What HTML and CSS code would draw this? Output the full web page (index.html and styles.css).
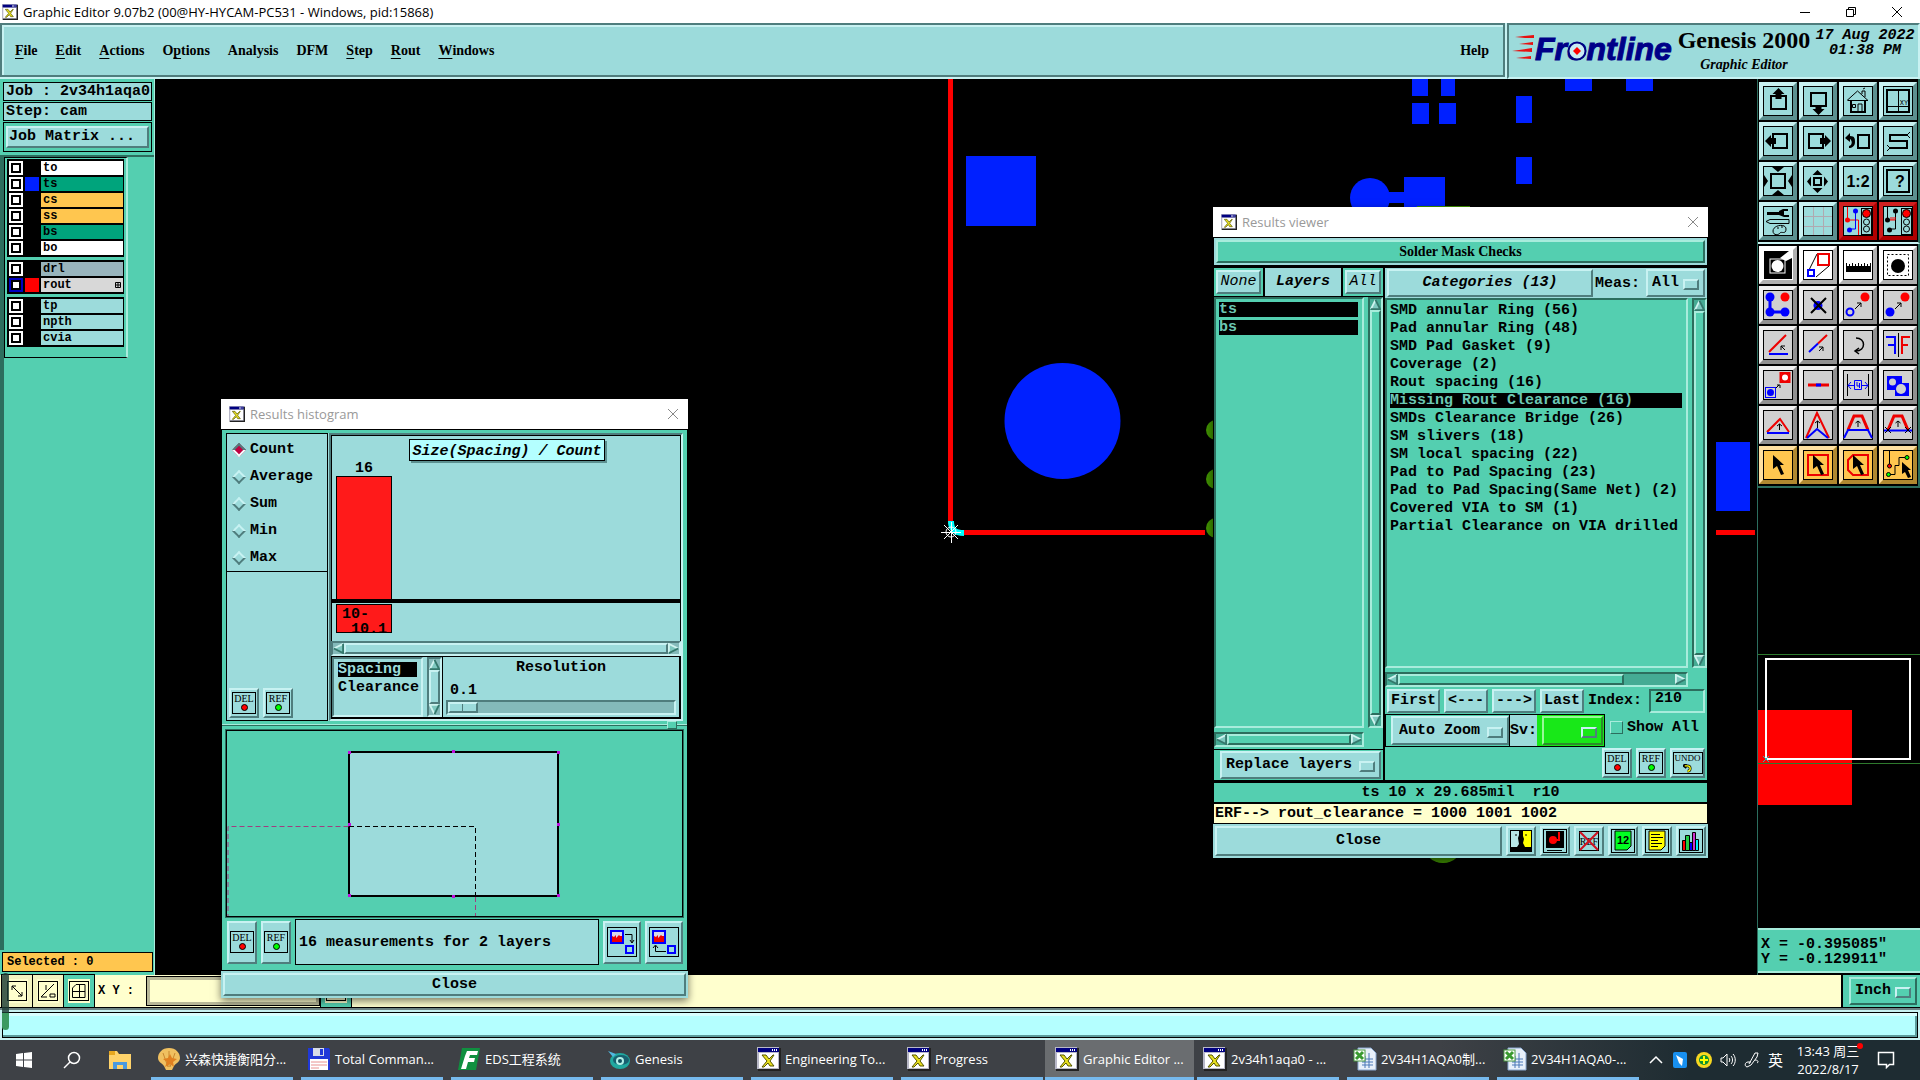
FILE: index.html
```html
<!DOCTYPE html>
<html lang="en">
<head>
<meta charset="utf-8">
<title>Graphic Editor 9.07b2</title>
<link rel="stylesheet" href="styles.css">
</head>
<body>
<svg class="defs" aria-hidden="true">
  <symbol id="app" viewBox="0 0 24 24"><rect x="1" y="1" width="23" height="23" fill="#222"/><rect width="22" height="22" fill="#b8b8c8"/><rect x="1" y="1" width="21" height="4" fill="#000080"/><path d="M15 2h1v2h-1zM17 2h1v2h-1zM19 2h1v2h-1z" fill="#fff"/><rect x="2" y="6" width="19" height="15" fill="#fff"/><path d="M5 8h4l3 4 4-4h1l-4 6 4 5h-4l-2-3-4 4H5l5-6z" fill="#e8e020" stroke="#555500"/></symbol>
  <symbol id="up" viewBox="0 0 12 12"><path d="M6 1 1 11h10z" fill="#7fc9c0"/><path d="M1 11 6 1" stroke="#d0f4f0" stroke-width="2"/><path d="M6 1l5 10H1" fill="none" stroke="#34786c" stroke-width="2"/></symbol>
  <symbol id="down" viewBox="0 0 12 12"><path d="M6 11 1 1h10z" fill="#7fc9c0"/><path d="M11 1H1l5 10" fill="none" stroke="#d0f4f0" stroke-width="2"/><path d="M6 11 11 1" stroke="#34786c" stroke-width="2"/></symbol>
  <symbol id="left" viewBox="0 0 12 12"><path d="M1 6 11 1v10z" fill="#7fc9c0"/><path d="M1 6 11 1" stroke="#d0f4f0" stroke-width="2"/><path d="M11 1v10L1 6" fill="none" stroke="#34786c" stroke-width="2"/></symbol>
  <symbol id="right" viewBox="0 0 12 12"><path d="M11 6 1 1v10z" fill="#7fc9c0"/><path d="M1 11V1l10 5" fill="none" stroke="#d0f4f0" stroke-width="2"/><path d="M11 6 1 11" stroke="#34786c" stroke-width="2"/></symbol>
  <symbol id="cur" viewBox="0 0 30 30"><path d="M10 5v14l4-3 4 9 3-1-4-9h4z"/></symbol>
  <symbol id="lights" viewBox="0 0 30 30"><rect x="18.500" y="2.500" width="10" height="26" fill="#9cdbdb" stroke="#000"/><circle cx="23.500" cy="7.500" r="4" fill="#f00" stroke="#000"/><circle cx="23.500" cy="16" r="3" fill="none" stroke="#000"/><circle cx="23.500" cy="23" r="3" fill="none" stroke="#000"/></symbol>
  <symbol id="excel" viewBox="0 0 24 24"><path d="M5 1h13l5 5v17H5z" fill="#e8f0fa" stroke="#8aa8d0"/><path d="M9 12h11M9 15h11M9 18h11M12 9v12M16 6v15" stroke="#4a78b8"/><rect x="1" y="3" width="11" height="11" fill="#fff" stroke="#4a9a40"/><path d="m3 5 7 7M10 5l-7 7" stroke="#3a9a30" stroke-width="3"/></symbol>
</svg>

<header class="titlebar">
  <svg class="i16"><use href="#app"/></svg>
  <h1>Graphic Editor 9.07b2 (00@HY-HYCAM-PC531 - Windows, pid:15868)</h1>
  <div class="winbtns">
    <button aria-label="Minimize"><svg viewBox="0 0 12 12"><path d="M1 6.500h10" stroke="#000"/></svg></button>
    <button aria-label="Restore"><svg viewBox="0 0 12 12"><path d="M1.500 3.500h7v7h-7zM3.500 3.500v-2h7v7h-2" fill="none" stroke="#000"/></svg></button>
    <button aria-label="Close window"><svg viewBox="0 0 12 12"><path d="m1 1 10 10M11 1 1 11" stroke="#000"/></svg></button>
  </div>
</header>

<div class="menurow">
  <nav class="menubar">
    <button><u>F</u>ile</button><button><u>E</u>dit</button><button><u>A</u>ctions</button><button>O<u>p</u>tions</button><button>Analysis</button><button>DFM</button><button><u>S</u>tep</button><button><u>R</u>out</button><button><u>W</u>indows</button>
    <button class="help">Help</button>
  </nav>
  <div class="brand">
    <svg class="logo" viewBox="0 -4 164 44"><g fill="#e81010"><path d="M3 4l19-2v3H13zM7 11l14-2v3zM0 18l20-3v4zM4 25l15-2v3z"/></g><text x="23" y="27" class="logotext">Frontline</text><circle cx="65" cy="18" r="8.500" fill="#c8ecf4" stroke="#000080" stroke-width="2"/><path d="m65 14 4 4-4 4-4-4z" fill="#f00"/></svg>
    <div class="product"><strong>Genesis 2000</strong><em>Graphic Editor</em></div>
    <time class="stamp">17 Aug 2022<br>01:38 PM</time>
  </div>
</div>

<main class="work">
  <aside class="side">
    <div class="jobbox">
      <p>Job : 2v34h1aqa0</p><p>Step: cam</p>
      <div class="matrix"><button class="bev">Job Matrix ...</button></div>
    </div>
    <div class="layerpane">
      <div class="layers">
        <ul>
          <li class="white"><input type="checkbox" id="l1"><i></i><label for="l1">to</label></li>
          <li class="mask"><input type="checkbox" id="l2"><i class="blue"></i><label for="l2">ts</label></li>
          <li class="signal"><input type="checkbox" id="l3"><i></i><label for="l3">cs</label></li>
          <li class="signal"><input type="checkbox" id="l4"><i></i><label for="l4">ss</label></li>
          <li class="mask"><input type="checkbox" id="l5"><i></i><label for="l5">bs</label></li>
          <li class="white"><input type="checkbox" id="l6"><i></i><label for="l6">bo</label></li>
        </ul>
        <ul>
          <li class="drill"><input type="checkbox" id="l7"><i></i><label for="l7">drl</label></li>
          <li class="rout"><input type="checkbox" id="l8" checked><i class="red"></i><label for="l8">rout<svg viewBox="0 0 6 6"><path d="M.5.5h5v5h-5zM3 0v6M0 3h6" fill="none" stroke="#000"/></svg></label></li>
        </ul>
        <ul>
          <li><input type="checkbox" id="l9"><i></i><label for="l9">tp</label></li>
          <li><input type="checkbox" id="l10"><i></i><label for="l10">npth</label></li>
          <li><input type="checkbox" id="l11"><i></i><label for="l11">cvia</label></li>
        </ul>
      </div>
    </div>
    <p class="selected">Selected : 0</p>
  </aside>

  <div class="canvas">
    <svg width="100%" height="100%"><g transform="translate(-155 -79)">
      <g fill="#0020ff"><rect x="966" y="156" width="70" height="70"/><circle cx="1062.500" cy="421" r="58"/>
      <path d="M1412 79h16v17h-16zM1441 79h14v17h-14zM1412 103h17v21h-17zM1439 103h17v21h-17zM1565 79h27v12h-27zM1626 79h27v12h-27zM1516 96h16v27h-16zM1516 157h16v27h-16zM1404 177h41v40h-41zM1385 192h22v11h-22zM1716 442h34v69h-34z"/><circle cx="1370" cy="198" r="20"/></g>
      <g fill="#3f8f00"><circle cx="1216" cy="430" r="10"/><circle cx="1216" cy="479" r="10"/><circle cx="1216" cy="528" r="10"/><circle cx="1443" cy="843" r="20"/><rect x="1417" y="206" width="53" height="2"/></g>
      <path d="M950.500 79v445M962 532.500h243M1716 532.500h39" stroke="#f00" stroke-width="5"/>
      <path d="M951 521c0 8 3 12 13 12" fill="none" stroke="#0ff" stroke-width="6"/>
      <g stroke="#fff" fill="none"><circle cx="951" cy="532" r="5"/><path d="M941 532.500h20M951.500 522v21M944 525l14 14M958 525l-14 14"/></g>
    </g></svg>
  </div>

  <aside class="tools">
    <div class="grid top">
      <button aria-label="Pan up"><svg viewBox="0 0 30 30"><rect class="f" x=".5" y=".5" width="29" height="29"/><rect class="s2" x="8" y="10" width="15" height="13"/><path d="M15.500 2l6 6h-3v5h-6V8h-3z"/></svg></button>
      <button aria-label="Pan down"><svg viewBox="0 0 30 30"><rect class="f" x=".5" y=".5" width="29" height="29"/><rect class="s2" x="8" y="7" width="15" height="13"/><path d="M15.500 29l6-6h-3v-4h-6v4h-3z"/></svg></button>
      <button aria-label="Home"><svg viewBox="0 0 30 30"><rect class="f" x=".5" y=".5" width="29" height="29"/><path class="s1" d="M4 14.500 14.500 5l10.500 9.500M5 14.500h20M9.500 18.500h3v3h-3zM15 26v-8h4v8M19 8V5h3v6M20 3l2-1"/><path class="s2" d="M8 14v12h14V14"/></svg></button>
      <button aria-label="Windows XY"><svg viewBox="0 0 30 30"><rect class="f" x=".5" y=".5" width="29" height="29"/><rect class="s2" x="4" y="4" width="22" height="22"/><path class="s1" d="M15.500 4v22M4 20.500h22"/><text x="21" y="19" class="xy">XY</text></svg></button>
      <button aria-label="Pan left"><svg viewBox="0 0 30 30"><rect class="f" x=".5" y=".5" width="29" height="29"/><rect class="s2" x="10" y="8" width="14" height="14"/><path d="M2 15l6-6v3h5v6H8v3z"/></svg></button>
      <button aria-label="Pan right"><svg viewBox="0 0 30 30"><rect class="f" x=".5" y=".5" width="29" height="29"/><rect class="s2" x="6" y="8" width="14" height="14"/><path d="M28 15l-6-6v3h-5v6h5v3z"/></svg></button>
      <button aria-label="Previous view"><svg viewBox="0 0 30 30"><rect class="f" x=".5" y=".5" width="29" height="29"/><rect class="s2" x="15" y="9" width="11" height="13"/><path d="M2 12l5-5v3c5 0 5 3 5 6 0 4-3 6-6 6v-2c4-1 3-6 1-7v3z"/></svg></button>
      <button aria-label="Snake"><svg viewBox="0 0 30 30"><rect class="f" x=".5" y=".5" width="29" height="29"/><path class="s2" d="M24 9H7v6h17v7H7"/><path class="s1" d="M24 9l3-3M24 9l3 3M7 22l-3-3M7 22l-3 3"/></svg></button>
      <button aria-label="Zoom fit"><svg viewBox="0 0 30 30"><rect class="f" x=".5" y=".5" width="29" height="29"/><rect class="s2" x="8" y="8" width="14" height="14"/><path d="M9 1h12l-6 5zM9 29h12l-6-5zM1 9v12l4-6zM29 9v12l-4-6z"/></svg></button>
      <button aria-label="Zoom out"><svg viewBox="0 0 30 30"><rect class="f" x=".5" y=".5" width="29" height="29"/><rect class="s2" x="11" y="12" width="7" height="7"/><path d="M14.500 4l5 5h-10zM14.500 27l5-5h-10zM4 15.500l4-5v10zM25 15.500l-4-5v10z"/></svg></button>
      <button aria-label="Zoom ratio"><svg viewBox="0 0 30 30"><rect class="f" x=".5" y=".5" width="29" height="29"/><text x="15" y="21" class="ic">1:2</text></svg></button>
      <button aria-label="Query"><svg viewBox="0 0 30 30"><rect class="f" x=".5" y=".5" width="29" height="29"/><rect class="s2" x="4" y="4" width="22" height="22"/><text x="17" y="21" class="ic">?</text></svg></button>
      <button aria-label="Setup"><svg viewBox="0 0 30 30"><rect class="f" x=".5" y=".5" width="29" height="29"/><path d="M4 6h13v3H4zM16 5l4-2h5v2h-4v4h5v2h-5l-5-2z"/><path class="s1" d="M3 15.500l4-2h19v4H7zM10 25c0-6 13-8 13-2s-5 2-6 4-7 3-7-2zM14 22h2M18 21h2"/></svg></button>
      <button aria-label="Grid"><svg viewBox="0 0 30 30"><rect class="f" x=".5" y=".5" width="29" height="29"/><path d="M10.500 1v28M20.500 1v28M1 10.500h28M1 20.500h28" stroke="#b0a8b0"/></svg></button>
      <button class="redb" aria-label="Active nets"><svg viewBox="0 0 30 30"><rect class="f" x=".5" y=".5" width="29" height="29"/><path d="M4.500 1v13h11v15" fill="none" stroke="#f00"/><path d="M12.500 5v18H7" fill="none" stroke="#00f"/><circle cx="4.500" cy="14" r="2.500" fill="#f00"/><circle cx="12.500" cy="5" r="2.500" fill="#00f"/><circle cx="6.500" cy="24" r="2.500" fill="#00f"/><use href="#lights"/></svg></button>
      <button class="redb" aria-label="Spacing check"><svg viewBox="0 0 30 30"><rect class="f" x=".5" y=".5" width="29" height="29"/><path class="s1" d="M4.500 1v13M12.500 5v18H7"/><circle cx="4.500" cy="14" r="2.500"/><circle cx="12.500" cy="5" r="2.500"/><circle cx="6.500" cy="24" r="2.500"/><path d="M7 14h5M8 11v3M10 11v3M12 11v3" stroke="#f00"/><use href="#lights"/></svg></button>
    </div>
    <div class="grid low">
      <button class="wh" aria-label="Select feature"><svg viewBox="0 0 30 30"><rect x="1" y="1" width="28" height="28"/><path d="M17 8l9-7h3v7l-6 3z" fill="#fff"/><rect x="7" y="9" width="15" height="14" fill="none" stroke="#fff"/><circle cx="14.500" cy="16" r="6" fill="#fff"/></svg></button>
      <button class="wh" aria-label="Magnify"><svg viewBox="0 0 30 30"><rect class="f" x=".5" y=".5" width="29" height="29"/><path class="s1" d="M6 20L14 4M13 27l13-11"/><rect x="15" y="4" width="11" height="11" fill="none" stroke="#e00" stroke-width="2"/><rect x="5" y="20" width="6" height="6" fill="none" stroke="#00f" stroke-width="2"/></svg></button>
      <button class="wh" aria-label="Measure"><svg viewBox="0 0 30 30"><rect class="f" x=".5" y=".5" width="29" height="29"/><path d="M3 16h25v6H3z"/><path d="M3.500 13v4M6.500 14v3M9.500 13v4M12.500 14v3M15.500 13v4M18.500 14v3M21.500 13v4M24.500 14v3M27.500 13v4" stroke="#000"/></svg></button>
      <button class="wh" aria-label="Area select"><svg viewBox="0 0 30 30"><rect class="f" x=".5" y=".5" width="29" height="29"/><rect x="4.500" y="4.500" width="21" height="21" fill="none" stroke="#000" stroke-dasharray="2"/><circle cx="15" cy="16" r="7"/></svg></button>

      <button aria-label="Add"><svg viewBox="0 0 30 30"><rect class="f" x=".5" y=".5" width="29" height="29"/><path d="M7 7v15h15" fill="none" stroke="#00f" stroke-width="3"/><g fill="#00f"><circle cx="7" cy="7" r="4.500"/><circle cx="7" cy="22" r="4.500"/><circle cx="22" cy="22" r="4.500"/></g><circle cx="22" cy="7" r="4.500" fill="#f00"/></svg></button>
      <button aria-label="Delete"><svg viewBox="0 0 30 30"><rect class="f" x=".5" y=".5" width="29" height="29"/><circle cx="15" cy="15.500" r="4.500" fill="#00f"/><path class="s2" d="M8 8l15 15M23 8L8 23"/></svg></button>
      <button aria-label="Move"><svg viewBox="0 0 30 30"><rect class="f" x=".5" y=".5" width="29" height="29"/><circle cx="7" cy="22" r="3.500" fill="none" stroke="#00f" stroke-width="2"/><circle cx="22" cy="7" r="4.500" fill="#f00"/><path class="s1" d="M12 19l6-6M14 13h4v4"/></svg></button>
      <button aria-label="Copy"><svg viewBox="0 0 30 30"><rect class="f" x=".5" y=".5" width="29" height="29"/><circle cx="7" cy="22" r="4.500" fill="#00f"/><circle cx="22" cy="7" r="4.500" fill="#f00"/><path class="s1" d="M12 19l6-6M14 13h4v4"/></svg></button>
      <button aria-label="Rotate line"><svg viewBox="0 0 30 30"><rect class="f" x=".5" y=".5" width="29" height="29"/><path d="M6 22L23 5" stroke="#e00" stroke-width="2"/><path d="M6 24h19" stroke="#00f" stroke-width="2"/><path class="s1" d="M22 20l-4-4M18 20v-4h4"/></svg></button>
      <button aria-label="Stretch line"><svg viewBox="0 0 30 30"><rect class="f" x=".5" y=".5" width="29" height="29"/><path d="M15 13.500L24 5" stroke="#e00" stroke-width="2"/><path d="M6 22l9-8.500" stroke="#00f" stroke-width="2"/><path class="s1" d="M16 21l4-4M16 17h4v4"/></svg></button>
      <button aria-label="Rotate"><svg viewBox="0 0 30 30"><rect class="f" x=".5" y=".5" width="29" height="29"/><path d="M13 8c10 0 10 13 0 13M16 18l-4 3 4 3" fill="none" stroke="#000" stroke-width="1.500"/></svg></button>
      <button aria-label="Mirror"><svg viewBox="0 0 30 30"><rect class="f" x=".5" y=".5" width="29" height="29"/><path class="s1" d="M15.500 3v24"/><path d="M3 7h9v17M5 15h7" fill="none" stroke="#00f" stroke-width="2"/><path d="M27 7h-8v17M25 15h-6" fill="none" stroke="#e00" stroke-width="2"/></svg></button>
      <button aria-label="Copy to layer"><svg viewBox="0 0 30 30"><rect class="f" x=".5" y=".5" width="29" height="29"/><rect x="17.500" y="3" width="9" height="9" fill="#fff" stroke="#e00" stroke-width="2"/><circle cx="22" cy="7.500" r="4" fill="none" stroke="#e00" stroke-width="2"/><rect x="2.500" y="17.500" width="10" height="10" fill="none" stroke="#00f"/><circle cx="7.500" cy="22.500" r="3.500" fill="#00f"/><path class="s1" d="M13 18l3-3M14 15h3v3"/></svg></button>
      <button aria-label="Break line"><svg viewBox="0 0 30 30"><rect class="f" x=".5" y=".5" width="29" height="29"/><path d="M5 15h21" stroke="#e00" stroke-width="3"/><path d="M13 15h5" stroke="#00f" stroke-width="3"/></svg></button>
      <button aria-label="Spacing"><svg viewBox="0 0 30 30"><rect class="f" x=".5" y=".5" width="29" height="29"/><path class="s1" d="M4.500 4v22M25.500 4v22"/><path d="M5 15.500h6M19 15.500h6M8 12l-3 3.500L8 19M22 12l3 3.500-3 3.500M11.500 10.500h7v9h-7zM14 12v4h3M16.500 13v5" fill="none" stroke="#00f"/></svg></button>
      <button aria-label="Merge shapes"><svg viewBox="0 0 30 30"><rect class="f" x=".5" y=".5" width="29" height="29"/><path d="M4 6h15v7h7v13H12v-6H4z" fill="#00f"/><circle cx="9.500" cy="12" r="3.500" fill="#d0d0d0"/><circle cx="18" cy="19" r="5" fill="#d0d0d0"/></svg></button>
      <button aria-label="Flat corner"><svg viewBox="0 0 30 30"><rect class="f" x=".5" y=".5" width="29" height="29"/><path d="M4 22L17 9l9 13" fill="none" stroke="#e00" stroke-width="2"/><path d="M4 23h22" stroke="#00f" stroke-width="2"/><path class="s1" d="M16.500 20v-6M14 16l2.500-2 2.500 2"/></svg></button>
      <button aria-label="Peak"><svg viewBox="0 0 30 30"><rect class="f" x=".5" y=".5" width="29" height="29"/><path d="M3 28L14 3l12 25" fill="none" stroke="#e00" stroke-width="2"/><path d="M4 28l10-9 11 9" fill="none" stroke="#00f" stroke-width="2"/><path class="s1" d="M14.500 18v-7M12 13l2.500-2 2.500 2"/></svg></button>
      <button aria-label="Plateau"><svg viewBox="0 0 30 30"><rect class="f" x=".5" y=".5" width="29" height="29"/><path d="M5 20l6-14h8l6 14" fill="none" stroke="#e00" stroke-width="3"/><path d="M1 28l4-8h20l4 8" fill="none" stroke="#00f" stroke-width="2"/><path class="s1" d="M15 17v-6M12.500 13l2.500-2 2.500 2"/></svg></button>
      <button aria-label="Plateau cut"><svg viewBox="0 0 30 30"><rect class="f" x=".5" y=".5" width="29" height="29"/><path d="M5 20l6-14h8l6 14" fill="none" stroke="#e00" stroke-width="3"/><path d="M1 20.500h28" stroke="#00f" stroke-width="2"/><path class="s1" d="M15 17v-6M12.500 13l2.500-2 2.500 2M2 17l6 6M8 17l-6 6M22 17l6 6M28 17l-6 6"/></svg></button>
      <button class="or" aria-label="Select"><svg viewBox="0 0 30 30"><rect class="f" x=".5" y=".5" width="29" height="29"/><use href="#cur"/></svg></button>
      <button class="or" aria-label="Select box"><svg viewBox="0 0 30 30"><rect class="f" x=".5" y=".5" width="29" height="29"/><rect x="5" y="5" width="20" height="20" fill="none" stroke="#e00" stroke-width="2"/><use href="#cur"/></svg></button>
      <button class="or" aria-label="Select polygon"><svg viewBox="0 0 30 30"><rect class="f" x=".5" y=".5" width="29" height="29"/><path d="M10 5h15v20H10l-5-5V10z" fill="none" stroke="#e00" stroke-width="2"/><use href="#cur"/></svg></button>
      <button class="or" aria-label="Select net"><svg viewBox="0 0 30 30"><rect class="f" x=".5" y=".5" width="29" height="29"/><path class="s1" d="M6.500 1v14M6 24.500h6v-9h4v-8h6"/><circle cx="6.500" cy="16" r="2" fill="#f00" stroke="#000"/><circle cx="24" cy="7.500" r="2" fill="#0f0" stroke="#000"/><circle cx="5.500" cy="24.500" r="2" fill="#0f0" stroke="#000"/><path d="M19 12v12l3-2 3 6 3-1-3-7h3z"/></svg></button>
    </div>
    <div class="mini"><svg width="100%" height="100%"><g transform="translate(-1758 -488)"><path d="M1758 710h94v95h-94z" fill="#f00"/><path d="M1758 654.500h162M1758 763.500h162" stroke="#2e7a2e"/><rect x="1766" y="659" width="144" height="100" fill="none" stroke="#fff" stroke-width="2"/><path d="M1763 756l6 6M1769 756l-6 6" stroke="#20c0c0"/></g></svg></div>
    <p class="coords">X = -0.395085"<br>Y = -0.129911"</p>
  </aside>
</main>

<footer class="entry">
  <button class="sq" aria-label="Snap"><svg viewBox="0 0 20 20"><rect class="f" x=".5" y=".5" width="19" height="19"/><path class="s1" d="M5 5l10 10M5 9V5h4M15 11v4h-4"/></svg></button>
  <button class="sq" aria-label="Angle"><svg viewBox="0 0 20 20"><rect class="f" x=".5" y=".5" width="19" height="19"/><path class="s1" d="M16 3L3 16h6M8 4v5M12 13h5v3h-5z"/></svg></button>
  <button class="sq grn" aria-label="Grid snap"><svg viewBox="0 0 20 20"><rect class="f" x=".5" y=".5" width="19" height="19"/><path class="s1" d="M7 3.500h9v13H3.500V7zM10.500 3v14M3 10.500h13"/></svg></button>
  <label for="xy">X Y :</label>
  <input id="xy" type="text">
  <button class="sq grn" aria-label="Apply"><svg viewBox="0 0 20 20"><rect class="f" x=".5" y=".5" width="19" height="19"/></svg></button>
  <div class="unit"><span class="opt gopt"><select aria-label="Units"><option>Inch</option></select></span></div>
</footer>
<div class="cmd"><input type="text" aria-label="Command line"></div>
<div class="grip"></div>

<section class="win hist">
  <header class="wtitle"><svg class="i16"><use href="#app"/></svg><h2>Results histogram</h2><button aria-label="Close histogram"><svg viewBox="0 0 12 12"><path d="m1 1 10 10M11 1 1 11" stroke="#888"/></svg></button></header>
  <div class="hbody">
    <div class="htop">
      <div class="modes">
        <fieldset>
          <label><input type="radio" name="m" checked>Count</label>
          <label><input type="radio" name="m">Average</label>
          <label><input type="radio" name="m">Sum</label>
          <label><input type="radio" name="m">Min</label>
          <label><input type="radio" name="m">Max</label>
        </fieldset>
        <div class="pair"><button class="ib"><span class="tag">DEL<i></i></span></button><button class="ib"><span class="tag ok">REF<i></i></span></button></div>
      </div>
      <div class="chartcol">
        <div class="chart">
          <h3>Size(Spacing) / Count</h3>
          <div class="barcol"><span>16</span><div class="bar"></div></div>
          <div class="axis"><div class="range"><span>10-</span><span>10.1</span></div></div>
        </div>
        <div class="sb h"><svg><use href="#left"/></svg><div class="thumb"></div><svg><use href="#right"/></svg></div>
        <div class="hopts">
          <ul class="pick"><li class="on">Spacing</li><li>Clearance</li></ul>
          <div class="sb v"><svg><use href="#up"/></svg><div class="thumb"></div><svg><use href="#down"/></svg></div>
          <div class="res"><label for="rs">Resolution</label><output>0.1</output><input id="rs" type="range" value="0"></div>
        </div>
      </div>
    </div>
    <div class="sash"><i></i></div>
    <div class="map"><svg width="100%" height="100%"><rect x="122" y="21" width="209" height="144" fill="#9cdbdb" stroke="#000" stroke-width="2"/><path d="M1 236V95.500h121M248.500 166v22" fill="none" stroke="#a03c80" stroke-dasharray="5 3"/><path d="M122 95.500h126.500V166" fill="none" stroke="#000" stroke-dasharray="5 3"/><path d="M121 20h3v3h-3zM225 19h3v3h-3zM330 20h3v3h-3zM121 92h3v3h-3zM330 92h3v3h-3zM121 163h3v3h-3zM225 164h3v3h-3zM330 163h3v3h-3z" fill="#c010e0"/></svg></div>
    <div class="hfoot">
      <button class="ib"><span class="tag">DEL<i></i></span></button><button class="ib"><span class="tag ok">REF<i></i></span></button>
      <p>16 measurements for 2 layers</p>
      <button class="ib big" aria-label="Next"><svg viewBox="0 0 30 30"><rect class="f" x=".5" y=".5" width="29" height="29"/><rect x="4" y="4" width="12" height="12" fill="#d8d8e8" stroke="#00f" stroke-width="2"/><path d="M5 15V9l2 1 2-2v3l3-3 1 1h2v6z" fill="#e00"/><rect x="19" y="19" width="7" height="7" fill="none" stroke="#00f" stroke-width="2"/><path class="s1" d="M18 7.500h7v8M23 13l2 3 2-3"/></svg></button>
      <button class="ib big" aria-label="Previous"><svg viewBox="0 0 30 30"><rect class="f" x=".5" y=".5" width="29" height="29"/><rect x="4" y="4" width="12" height="12" fill="#d8d8e8" stroke="#00f" stroke-width="2"/><path d="M5 15V9l2 1 2-2v3l3-3 1 1h2v6z" fill="#e00"/><rect x="19" y="19" width="7" height="7" fill="none" stroke="#00f" stroke-width="2"/><path class="s1" d="M17 24.500H6.500V19M4 21l2.500-3L9 21"/></svg></button>
    </div>
  </div>
  <div class="hclose"><button class="bev">Close</button></div>
</section>

<section class="win viewer">
  <header class="wtitle"><svg class="i16"><use href="#app"/></svg><h2>Results viewer</h2><button aria-label="Close viewer"><svg viewBox="0 0 12 12"><path d="m1 1 10 10M11 1 1 11" stroke="#888"/></svg></button></header>
  <div class="vhead"><button class="bev">Solder Mask Checks</button></div>
  <div class="vmain">
    <div class="vleft">
      <div class="lhead"><span><button class="bev">None</button></span><b>Layers</b><span><button class="bev">All</button></span></div>
      <div class="lbody">
        <ul class="pick"><li class="on">ts</li><li class="on">bs</li></ul>
        <div class="sb v"><svg><use href="#up"/></svg><div class="thumb"></div><svg><use href="#down"/></svg></div>
      </div>
      <div class="sb h"><svg><use href="#left"/></svg><div class="thumb"></div><svg><use href="#right"/></svg></div>
      <div class="repl"><span class="opt"><select aria-label="Layer mode"><option>Replace layers</option></select></span></div>
    </div>
    <div class="vright">
      <div class="chead"><button class="bev">Categories (13)</button><label for="ms">Meas:</label><span class="opt"><select id="ms"><option>All</option></select></span></div>
      <div class="lbody">
        <ul class="pick"><li>SMD annular Ring (56)</li><li>Pad annular Ring (48)</li><li>SMD Pad Gasket (9)</li><li>Coverage (2)</li><li>Rout spacing (16)</li><li class="on">Missing Rout Clearance (16)</li><li>SMDs Clearance Bridge (26)</li><li>SM slivers (18)</li><li>SM local spacing (22)</li><li>Pad to Pad Spacing (23)</li><li>Pad to Pad Spacing(Same Net) (2)</li><li>Covered VIA to SM (1)</li><li>Partial Clearance on VIA drilled</li></ul>
        <div class="sb v"><svg><use href="#up"/></svg><div class="thumb"></div><svg><use href="#down"/></svg></div>
      </div>
      <div class="sb h part"><svg><use href="#left"/></svg><div class="thumb"></div><svg><use href="#right"/></svg></div>
      <div class="step"><button class="bev w">First</button><button class="bev">&lt;---</button><button class="bev">---&gt;</button><button class="bev">Last</button><label for="ix">Index:</label><input id="ix" type="text" value="210"></div>
      <div class="zoomrow"><div class="az"><span class="opt"><select aria-label="Zoom mode"><option>Auto Zoom</option></select></span></div><label for="sv">Sv:</label><div class="svb"><span class="opt"><select id="sv"><option></option></select></span></div><label class="show"><input type="checkbox">Show All</label></div>
      <div class="icons"><button class="ib"><span class="tag">DEL<i></i></span></button><button class="ib"><span class="tag ok">REF<i></i></span></button><button class="ib undo"><span class="tag">UNDO<svg viewBox="0 0 10 10"><path d="M2 2h3c4 0 4 6 0 6M4 0L1 2l3 2" fill="none" stroke="#000" stroke-width="3"/><path d="M2 2h3c4 0 4 6 0 6" fill="none" stroke="#ff0" stroke-width="1.500"/></svg></span></button></div>
    </div>
  </div>
  <p class="info">ts 10 x 29.685mil&nbsp; r10</p>
  <p class="erf">ERF--&gt; rout_clearance = 1000 1001 1002</p>
  <div class="vfoot"><button class="bev">Close</button>
    <button class="ib" aria-label="Hide"><svg viewBox="0 0 24 24"><rect x="1" y="1" width="22" height="22"/><path d="M2 2h8v4l-1 3 1 6-2 3H2z" fill="#b8e8e8"/><path d="M14 2h8v16h-6l-2-4 1-4-1-3z" fill="#ff0"/><path d="M7 5v2M17 5v2" stroke="#000"/></svg></button>
    <button class="ib" aria-label="Snapshot"><svg viewBox="0 0 24 24"><rect class="f" x=".5" y=".5" width="23" height="23"/><rect x="3" y="2" width="18" height="17"/><circle cx="10" cy="11" r="4" fill="#f00"/><path d="M12 11h4V3" fill="none" stroke="#f00" stroke-width="2"/><path class="s1" d="M4 21.500h15"/></svg></button>
    <button class="ib" aria-label="Clear reference"><svg viewBox="0 0 24 24"><rect class="f" x="2.500" y="2.500" width="19" height="19"/><text x="12" y="16" class="tiny">REF</text><path d="M3 3l18 18M21 3L3 21" stroke="#d01020" stroke-width="2"/></svg></button>
    <button class="ib" aria-label="Numbers"><svg viewBox="0 0 24 24"><rect class="f" x=".5" y=".5" width="23" height="23"/><path d="M4 2h16v15l-4 4H4z" fill="#0f2" stroke="#000"/><text x="12" y="15" class="num">12</text></svg></button>
    <button class="ib" aria-label="Report"><svg viewBox="0 0 24 24"><rect class="f" x=".5" y=".5" width="23" height="23"/><path d="M4 2h16v15l-4 4H4z" fill="#ff0" stroke="#000"/><path class="s1" d="M6 5.500h9M6 8.500h12M6 11.500h7M6 14.500h11M6 17.500h7"/></svg></button>
    <button class="ib" aria-label="Histogram"><svg viewBox="0 0 24 24"><rect class="f" x=".5" y=".5" width="23" height="23"/><g stroke="#000"><path d="M3.500 11.500h3v10h-3z" fill="#f00"/><path d="M6.500 6.500h4v15h-4z" fill="#2c4"/><path d="M10.500 13.500h3v8h-3z" fill="#00f"/><path d="M13.500 3.500h3v18h-3z" fill="#c3c"/><path d="M16.500 10.500h3v11h-3z" fill="#0ef"/></g></svg></button>
  </div>
</section>

<nav class="taskbar">
  <button class="sys" aria-label="Start"><svg viewBox="0 0 18 18"><path d="M1 3l7-1v6.500H1zM9 2l8-1v7.500H9zM1 9.500h7V16l-7-1zM9 9.500h8V17l-8-1z" fill="#fff"/></svg></button>
  <button class="sys" aria-label="Search"><svg viewBox="0 0 18 18"><circle cx="11" cy="7" r="5.500" fill="none" stroke="#fff" stroke-width="1.500"/><path d="M7 11l-6 6" stroke="#fff" stroke-width="1.500"/></svg></button>
  <button class="sys" aria-label="File explorer"><svg class="i22" viewBox="0 0 22 20"><path d="M0 1h8l2 3h12v15H0z" fill="#ffd36b"/><path d="M0 1h6v4H0z" fill="#e8a820"/><path d="M4 19v-7h14v7h-4v-4H8v4z" fill="#4a9ae0"/></svg></button>
  <button class="task"><svg viewBox="0 0 24 24"><path d="M12 1c7 0 11 5 11 10 0 4-4 5-6 8l-2 4H9l-2-4c-2-3-6-4-6-8C1 6 5 1 12 1z" fill="#f0c060"/><path d="M12 4v16M6 6l5 14M18 6l-5 14" stroke="#c88830"/><path d="M13 7l2 4 5 1-4 3 1 5-4-3-5 3 2-5-4-3 5-1z" fill="#e08020"/></svg><span>兴森快捷衡阳分...</span></button>
  <button class="task"><svg viewBox="0 0 24 24"><path d="M1 1h21l1 2v20H1z" fill="#2038d8"/><path d="M6 1h11v8H6z" fill="#d8dce8"/><path d="M13 2h3v6h-3z" fill="#2038d8"/><path d="M3 12h18v11H3z" fill="#fff"/><path d="M4 15h16M4 18h16M4 21h8" stroke="#e89090"/></svg><span>Total Comman...</span></button>
  <button class="task"><svg viewBox="0 0 24 24"><path d="M5 1h18l-4 22H1z" fill="#109040"/><path d="M10 4h11l-1 4h-7l-1 3h6l-1 4h-6l-2 7H4l4-13z" fill="#fff"/></svg><span>EDS工程系统</span></button>
  <button class="task"><svg viewBox="0 0 24 24"><ellipse cx="13" cy="14" rx="10" ry="8" fill="#20a8a0"/><ellipse cx="14" cy="13" rx="8" ry="5" fill="#186070"/><circle cx="13" cy="14" r="4" fill="#b0f0e8"/><circle cx="13" cy="14" r="2" fill="#105060"/><path d="M1 4l8 3-3 3z" fill="#50b8e0"/></svg><span>Genesis</span></button>
  <button class="task"><svg><use href="#app"/></svg><span>Engineering To...</span></button>
  <button class="task"><svg><use href="#app"/></svg><span>Progress</span></button>
  <button class="task active"><svg><use href="#app"/></svg><span>Graphic Editor ...</span></button>
  <button class="task"><svg><use href="#app"/></svg><span>2v34h1aqa0 - ...</span></button>
  <button class="task"><svg><use href="#excel"/></svg><span>2V34H1AQA0制...</span></button>
  <button class="task"><svg><use href="#excel"/></svg><span>2V34H1AQA0-...</span></button>
  <div class="tray">
    <svg viewBox="0 0 16 16"><path d="M2 11l6-6 6 6" fill="none" stroke="#fff" stroke-width="1.500"/></svg>
    <svg viewBox="0 0 16 16"><rect x="1" width="14" height="16" rx="2" fill="#1890f0"/><path d="M4 3l7 4-1 7-3-3z" fill="#fff"/></svg>
    <svg viewBox="0 0 16 16"><circle cx="8" cy="8" r="8" fill="#f8d820"/><circle cx="8" cy="8" r="5" fill="#109030"/><path d="M8 4v8M4 8h8" stroke="#ff0" stroke-width="2"/></svg>
    <svg viewBox="0 0 16 16"><path d="M1 6h2l4-4v12l-4-4H1zM9 6c1 1 1 3 0 4M11 4c2 2 2 6 0 8M13 2c3 3 3 9 0 12" fill="none" stroke="#fff"/></svg>
    <svg viewBox="0 0 16 16"><path d="M5 12l6-11h3l-1 4-6 8-4 2c-3-1-2-5 1-5h3M11 8c3 0 4 2 2 3" fill="none" stroke="#fff"/></svg>
    <span class="ime">英</span>
    <time>13:43 周三<br>2022/8/17<i></i></time>
    <svg class="note" viewBox="0 0 18 18"><path d="M1.500 1.500h15v12h-4l-3 3v-3h-8z" fill="none" stroke="#fff" stroke-width="1.500"/></svg>
  </div>
</nav>
</body>
</html>
```
FILE: styles.css
```css
:root {
  --aqua: #9cdbdb;
  --aqua-hi: #c8f2f2;
  --aqua-lo: #4f7d7d;
  --green: #54cfb0;
  --green-hi: #a8ecdc;
  --green-lo: #2c6e5e;
  --cream: #ffffce;
  --orange: #ffc64f;
  --mono: "Liberation Mono", "Courier New", monospace;
  --serif: "Liberation Serif", "Times New Roman", serif;
  --ui: "Open Sans", "Noto Sans CJK SC", sans-serif;
}
* { box-sizing: border-box; }
body {
  margin: 0;
  min-height: 100vh;
  display: flex;
  flex-direction: column;
  position: relative;
  overflow: hidden;
  background: #000;
  font: bold 15px/18px var(--mono);
  color: #000;
}
p, h1, h2, h3, ul { margin: 0; padding: 0; }
ul { list-style: none; }
svg { display: block; flex: none; }
button, input, select { font: inherit; color: inherit; margin: 0; padding: 0; border: 0; border-radius: 0; background: none; }
button { display: flex; align-items: center; justify-content: center; white-space: nowrap; }
select { appearance: none; }
.defs { position: absolute; width: 0; height: 0; }
.i16 { width: 16px; height: 16px; }
.f { fill: none; stroke: #000; }
.s1 { fill: none; stroke: #000; }
.s2 { fill: none; stroke: #000; stroke-width: 2px; }
.tiny { font: 10px var(--serif); text-anchor: middle; }
.xy { font: 7px var(--mono); text-anchor: middle; }
.ic { font: bold 16px "Liberation Sans", sans-serif; text-anchor: middle; }
.num { font: bold 11px "Liberation Sans", sans-serif; text-anchor: middle; }
.bev {
  background: var(--aqua);
  border: 2px solid;
  border-color: var(--aqua-hi) var(--aqua-lo) var(--aqua-lo) var(--aqua-hi);
}

/* Title bar */
.titlebar { display: flex; align-items: center; height: 23px; background: #fff; padding-left: 2px; }
.titlebar h1 { font: 13px/20px var(--ui); margin-left: 5px; flex: 1; }
.winbtns { display: flex; }
.winbtns button { width: 46px; }
.winbtns svg { width: 12px; height: 12px; }

/* Menu row */
.menurow { display: flex; height: 56px; background: var(--aqua-hi); }
.menubar {
  flex: 1;
  display: flex;
  align-items: center;
  gap: 18px;
  padding: 2px 14px 0 13px;
  background: var(--aqua);
  border: 2px solid;
  border-color: var(--aqua-lo);
  box-shadow: inset 2px 2px var(--aqua-hi);
  margin: 0 2px 2px 0;
  font: bold 14px/18px var(--serif);
}
.menubar u { text-underline-offset: 3px; }
.help { margin-left: auto; }
.brand {
  width: 413px;
  display: flex;
  align-items: center;
  padding-left: 3px;
  background: var(--aqua);
  border: 2px solid;
  border-color: var(--aqua-lo) var(--aqua-hi) var(--aqua-hi) var(--aqua-lo);
}
.logo { width: 164px; height: 44px; }
.logotext { font: italic bold 32px "Liberation Sans", sans-serif; fill: #000088; stroke: #000088; stroke-width: 1px; }
.product { width: 136px; display: flex; flex-direction: column; align-items: center; white-space: nowrap; }
.product strong { font: bold 24px/28px var(--serif); }
.product em { font: italic bold 14px/22px var(--serif); }
.stamp { flex: 1; text-align: center; font-style: italic; line-height: 15px; margin-bottom: 16px; white-space: nowrap; }

/* Work area */
.work { flex: 1; display: flex; min-height: 0; }
.side { width: 155px; background: var(--green); display: flex; flex-direction: column; border-right: 1px solid var(--green-hi); }
.jobbox { padding: 3px 2px 3px 3px; border-bottom: 2px solid var(--green-lo); }
.jobbox p { height: 19px; margin-bottom: 1px; padding-left: 2px; line-height: 17px; border: 1px solid #000; background: var(--aqua); white-space: nowrap; }
.matrix { border: 1px solid #000; padding: 3px 2px; }
.matrix button { width: 100%; height: 22px; justify-content: flex-start; padding-left: 1px; }
.layerpane { flex: 1; border-left: 4px solid var(--green-lo); }
.layers { width: 124px; height: 201px; border: 1px solid #000; border-right: 2px solid var(--green-hi); padding: 1px 2px; display: flex; flex-direction: column; gap: 3px; }
.layers ul { background: #000; padding: 1px; }
.layers li { height: 16px; display: flex; align-items: center; gap: 2px; }
.layers input { appearance: none; width: 10px; height: 10px; margin: 0 2px 0 3px; border: 2px solid #000; background: #fff; box-shadow: 0 0 0 2px #fff; }
.layers input:checked { box-shadow: 0 0 0 2px #0000c0; }
.layers i { width: 14px; height: 14px; }
.layers i.blue { background: #0020ff; }
.layers i.red { background: #f00; }
.layers label { flex: 1; height: 14px; padding: 0 2px; display: flex; align-items: center; justify-content: space-between; background: var(--aqua); font-size: 12px; line-height: 14px; }
.layers label svg { width: 6px; height: 6px; }
.layers .white label { background: #fff; }
.layers .mask label { background: #00a47c; }
.layers .signal label { background: var(--orange); }
.layers .drill label { background: #98b4bc; }
.layers .rout label { background: #d8d8d8; }
.selected { margin: 2px 1px 3px 2px; height: 20px; padding-left: 4px; border: 1px solid #000; background: var(--orange); font-size: 12px; }
.canvas { flex: 1; min-width: 0; }

/* Tool column */
.tools { width: 163px; display: flex; flex-direction: column; border-left: 1px solid var(--green-lo); }
.grid { display: grid; grid-template-columns: repeat(4, 38px); grid-auto-rows: 38px; gap: 2px; padding: 2px 1px; border-right: 2px solid var(--green-lo); }
.grid.top { padding-top: 3px; border-bottom: 2px solid var(--aqua-hi); }
.grid.low { border-bottom: 2px solid var(--green-lo); }
.grid button { border: 4px solid; background: var(--aqua); border-color: var(--aqua-hi) #5c9090 #5c9090 var(--aqua-hi); }
.grid svg { width: 30px; height: 30px; }
.grid.low button { background: #d0d0d0; border-color: #f0f0f0 #909090 #909090 #f0f0f0; }
.grid.low .wh { background: #fff; border-color: #fff #b0b0b0 #b0b0b0 #fff; }
.grid.low .or { background: var(--orange); border-color: #ffe0a0 #b08830 #b08830 #ffe0a0; }
.grid .redb { border-color: #d02020 #b00000 #b00000 #d02020; }
.mini { flex: 1; min-height: 0; }
.coords { height: 45px; border-top: 2px solid var(--green-hi); border-bottom: 2px solid var(--green-hi); background: var(--green); padding: 7px 3px; line-height: 15px; margin-bottom: 2px; }

/* Coordinate entry and command line */
.entry { height: 33px; display: flex; align-items: stretch; gap: 1px; background: var(--cream); border-bottom: 1px solid #000; padding-left: 2px; }
.sq { width: 30px; border: 4px solid #f4f4c0; outline: 1px solid #000; }
.sq svg { width: 20px; height: 20px; }
.sq.grn { border-color: var(--green); }
.entry label { width: 50px; padding-left: 3px; font-size: 12px; line-height: 32px; white-space: pre; }
.entry input { width: 172px; border: 3px solid #b8b898; outline: 1px solid #000; margin: 2px 1px; }
.unit { margin-left: auto; width: 79px; background: var(--green); border-left: 2px solid #000; padding: 2px 3px 2px 6px; display: flex; }
.cmd { height: 32px; padding: 2px; border-top: 2px solid #6c8484; background: var(--aqua-hi); display: flex; }
.cmd input { flex: 1; background: #b4ffff; border: 1px solid #000; box-shadow: inset 0 3px #d8ffff, inset -2px -2px #5c9c9c; }
.grip { position: absolute; left: 2px; top: 973px; width: 7px; height: 57px; border-radius: 4px; background: linear-gradient(#1c3c34d0 70%, #3c9a60 70%); }

/* Option menu */
.opt { position: relative; display: flex; flex: 1; }
.opt select { flex: 1; width: 100%; background: var(--aqua); border: 2px solid; border-color: var(--aqua-hi) var(--aqua-lo) var(--aqua-lo) var(--aqua-hi); padding-left: 6px; }
.opt::after { content: ""; position: absolute; right: 6px; top: calc(50% - 4px); width: 12px; height: 7px; border: 2px solid; border-color: var(--aqua-hi) var(--aqua-lo) var(--aqua-lo) var(--aqua-hi); pointer-events: none; }
.gopt select { background: var(--green); border-color: var(--green-hi) var(--green-lo) var(--green-lo) var(--green-hi); padding-left: 4px; }

/* Scroll bars */
.sb { display: flex; border: 2px solid; border-color: var(--green-lo) var(--green-hi) var(--green-hi) var(--green-lo); background: #45ab94; }
.sb svg { width: 11px; height: 11px; }
.sb .thumb { flex: 1; background: var(--green); border: 2px solid; border-color: var(--green-hi) var(--green-lo) var(--green-lo) var(--green-hi); }
.sb.h { height: 15px; }
.sb.v { width: 15px; flex-direction: column; }
.hist .sb { background: #84baba; border-color: var(--aqua-lo) var(--aqua-hi) var(--aqua-hi) var(--aqua-lo); }
.hist .sb .thumb { background: var(--aqua); border-color: var(--aqua-hi) var(--aqua-lo) var(--aqua-lo) var(--aqua-hi); }

/* Floating windows */
.win { position: absolute; display: flex; flex-direction: column; box-shadow: 0 3px 8px #0008; background: var(--green); }
.wtitle { height: 30px; display: flex; align-items: center; background: #fff; padding: 0 9px 0 8px; flex: none; }
.wtitle h2 { flex: 1; margin-left: 5px; font: 13px/20px var(--ui); color: #999; }
.wtitle button svg { width: 12px; height: 12px; }
.pick li { height: 15px; line-height: 15px; margin-bottom: 3px; white-space: nowrap; }
.pick .on { background: #000; color: #6cc8b4; }
.ib { width: 30px; height: 30px; background: var(--aqua); border: 2px solid; border-color: var(--aqua-hi) var(--aqua-lo) var(--aqua-lo) var(--aqua-hi); flex: none; }
.ib svg { width: 24px; height: 24px; }
.tag { width: 24px; height: 22px; border: 1px solid #000; display: flex; flex-direction: column; align-items: center; font: 10px/11px var(--serif); }
.tag i { width: 7px; height: 7px; border: 1px solid #000; border-radius: 4px; background: #f00; }
.tag.ok i { background: #0f0; }
.tag svg { width: 9px; height: 9px; }
.undo { width: 35px; }
.undo .tag { width: 30px; font-size: 9px; }

/* Histogram */
.hist { left: 221px; top: 399px; width: 467px; }
.hbody { padding: 3px 4px 5px; border: 1px solid #000; }
.htop { display: flex; height: 288px; gap: 1px; background: var(--aqua); }
.modes { width: 102px; border: 1px solid #000; display: flex; flex-direction: column; }
.modes fieldset { margin: 0; padding: 2px 0 0 7px; border: 0; border-bottom: 1px solid #000; }
.modes fieldset label { display: flex; align-items: center; gap: 6px; height: 27px; }
.modes fieldset input { appearance: none; width: 10px; height: 10px; transform: rotate(45deg); border: 2px solid; border-color: var(--aqua-hi) var(--aqua-lo) var(--aqua-lo) var(--aqua-hi); }
.modes fieldset input:checked { background: #c00040; border-color: var(--aqua-lo) #f0ffff #f0ffff var(--aqua-lo); }
.pair { margin-top: auto; display: flex; gap: 4px; padding: 2px; }
.chartcol { flex: 1; display: flex; flex-direction: column; border: 2px solid; border-color: var(--aqua-lo) var(--aqua-hi) var(--aqua-hi) var(--aqua-lo); }
.chart { flex: 1; display: flex; flex-direction: column; border: 1px solid #000; border-bottom: 0; }
.chart h3 { width: 196px; height: 22px; margin: 3px auto 0 77px; background: #b4ffff; border: 1px solid #000; box-shadow: 2px 2px #5c9090; text-align: center; font: italic bold 15px/24px var(--mono); white-space: nowrap; }
.barcol { width: 56px; margin-left: 4px; text-align: center; flex: 1; display: flex; flex-direction: column; }
.barcol span { line-height: 15px; }
.bar { flex: 1; background: #ff1a1a; border: 1px solid #000; border-bottom: 0; }
.axis { border-top: 4px solid #000; height: 42px; padding: 1px 4px; }
.range { width: 56px; height: 29px; border: 1px solid #000; background: #ff1a1a; display: flex; flex-direction: column; line-height: 15px; padding-top: 2px; }
.range span { margin-left: 5px; }
.range span + span { margin-left: 14px; }
.hopts { height: 63px; display: flex; border: 1px solid #000; border-width: 1px 2px 2px 1px; }
.hopts .pick { width: 91px; padding: 3px 4px; border: 2px solid; border-color: var(--aqua-lo) var(--aqua-hi) var(--aqua-hi) var(--aqua-lo); margin-right: 4px; }
.hopts .on { color: var(--aqua); }
.res { flex: 1; border-left: 1px solid #000; display: flex; flex-direction: column; padding: 2px 3px; }
.res label { text-align: center; }
.res output { margin: 5px 0 0 4px; }
.res input { appearance: none; width: 100%; height: 15px; background: #84baba; border: 2px solid; border-color: var(--aqua-lo) var(--aqua-hi) var(--aqua-hi) var(--aqua-lo); }
.res input::-webkit-slider-thumb { appearance: none; width: 30px; height: 11px; background: linear-gradient(90deg, var(--aqua) 45%, var(--aqua-lo) 45% 50%, var(--aqua) 50%); border: 2px solid; border-color: var(--aqua-hi) var(--aqua-lo) var(--aqua-lo) var(--aqua-hi); }
.sash { height: 9px; padding-top: 3px; }
.sash::before { content: ""; display: block; border-top: 1px solid var(--green-hi); border-bottom: 1px solid var(--green-lo); margin: 0 -4px; }
.sash i { display: block; width: 10px; height: 8px; margin: -5px 6px 0 auto; background: var(--green); border: 1px solid; border-color: var(--green-hi) var(--green-lo) var(--green-lo) var(--green-hi); }
.map { height: 187px; border: 1px solid #000; outline: 1px solid var(--green-lo); }
.hfoot { display: flex; align-items: center; gap: 4px; padding: 2px 0 0 1px; height: 48px; }
.hfoot .ib { height: 43px; }
.hfoot .big { width: 38px; }
.big svg { width: 30px; height: 30px; }
.hfoot p { flex: 1; height: 46px; line-height: 46px; padding-left: 3px; border: 1px solid #000; background: var(--aqua); white-space: nowrap; }
.hclose { padding: 2px; background: var(--aqua); }
.hclose button { width: 100%; height: 23px; }

/* Results viewer */
.viewer { left: 1213px; top: 207px; width: 495px; }
.vhead { padding: 2px; background: var(--aqua); border: 1px solid #000; border-bottom-width: 3px; }
.vhead .bev { width: 100%; height: 23px; background: var(--green); border-color: var(--green-hi) var(--green-lo) var(--green-lo) var(--green-hi); font: bold 14px/18px var(--serif); }
.vmain { display: flex; height: 514px; border: 1px solid #000; border-top: 0; border-bottom-width: 2px; }
.vleft { width: 171px; display: flex; flex-direction: column; border-right: 2px solid #000; }
.lhead { display: flex; height: 29px; border-bottom: 1px solid #000; }
.lhead span { padding: 2px; display: flex; }
.lhead button { width: 45px; font-style: italic; font-weight: normal; }
.lhead span:last-child button { width: 36px; }
.lhead b { flex: 1; background: var(--aqua); border: 1px solid #000; border-width: 0 2px; text-align: center; font-style: italic; line-height: 28px; }
.lbody { flex: 1; min-height: 0; display: flex; justify-content: space-between; }
.lbody .pick { flex: 1; min-width: 0; margin-right: 4px; padding: 3px 4px 0 3px; border: 2px solid; border-color: var(--green-lo) var(--green-hi) var(--green-hi) var(--green-lo); }
.vleft > .sb { margin: 4px 19px 2px 0; }
.repl { height: 31px; border-top: 1px solid #000; padding: 1px 2px 1px 6px; display: flex; }
.repl select { padding-left: 4px; }
.vright { flex: 1; min-width: 0; display: flex; flex-direction: column; }
.chead { display: flex; height: 30px; background: var(--aqua); padding: 1px 2px; }
.chead > button { width: 206px; font-style: italic; }
.chead label { line-height: 29px; padding: 0 6px 0 2px; }
.chead select { padding-left: 4px; }
.part { margin: 4px 19px 2px 0; }
.sb.part .thumb { margin-right: 51px; }
.step { display: flex; gap: 4px; padding: 0 2px; height: 24px; }
.step button { width: 44px; }
.step .w { width: 53px; }
.step label { line-height: 24px; }
.step input { flex: 1; min-width: 0; margin-left: 3px; padding: 0 0 4px 4px; border: 2px solid; border-color: var(--green-lo) var(--green-hi) var(--green-hi) var(--green-lo); }
.zoomrow { display: flex; height: 33px; margin-top: 1px; }
.az { width: 125px; border: 1px solid #000; padding: 1px 0 1px 5px; display: flex; }
.zoomrow > label { background: var(--aqua); border: 1px solid #000; border-width: 1px 0; line-height: 31px; }
.svb { width: 68px; background: #18e818; border: 1px solid #000; border-left: 0; padding: 1px 1px 1px 5px; display: flex; }
.svb select { background: #18e818; border-color: #98f898 #2c8c2c #2c8c2c #98f898; }
.zoomrow > .show { display: flex; align-items: center; gap: 4px; background: none; border: 0; margin-left: 5px; line-height: 18px; padding-bottom: 6px; white-space: nowrap; }
.show input { appearance: none; width: 13px; height: 13px; border: 1px solid; border-color: var(--green-hi) var(--green-lo) var(--green-lo) var(--green-hi); }
.icons { display: flex; justify-content: flex-end; gap: 4px; padding: 1px 2px 2px; }
.info { height: 21px; line-height: 19px; text-align: center; border: 1px solid #000; }
.erf { height: 21px; line-height: 19px; border: 1px solid #000; background: var(--cream); padding-left: 1px; }
.vfoot { display: flex; gap: 4px; padding: 2px; background: var(--aqua); }
.vfoot .bev { flex: 1; }

/* Taskbar */
.taskbar { height: 40px; flex: none; display: flex; align-items: stretch; background: linear-gradient(90deg, #3e4146 75%, #1e2c32 88%); color: #fff; font: 13px/18px var(--ui); }
.sys { width: 48px; }
.sys svg { width: 18px; height: 18px; }
.sys .i22 { width: 22px; height: 20px; }
.taskbar .task { width: 142px; margin-right: 8px; justify-content: flex-start; gap: 4px; padding: 0 6px; border-bottom: 3px solid #76b9ed; overflow: hidden; }
.sys + .task { margin-left: 7px; }
.task svg { width: 24px; height: 24px; }
.taskbar .active { background: #6a6d70; width: 149px; margin: 0 3px 0 -6px; padding-left: 10px; }
.tray { margin-left: auto; display: flex; align-items: center; gap: 8px; padding-right: 25px; }
.tray svg { width: 16px; height: 16px; }
.tray .ime { font-size: 15px; }
.tray time { position: relative; text-align: center; width: 74px; line-height: 18px; font-size: 13px; white-space: nowrap; }
.tray time i { position: absolute; right: 2px; top: 1px; width: 6px; height: 6px; border-radius: 3px; background: #f00; }
.tray .note { width: 18px; height: 18px; margin-left: 4px; }
```
